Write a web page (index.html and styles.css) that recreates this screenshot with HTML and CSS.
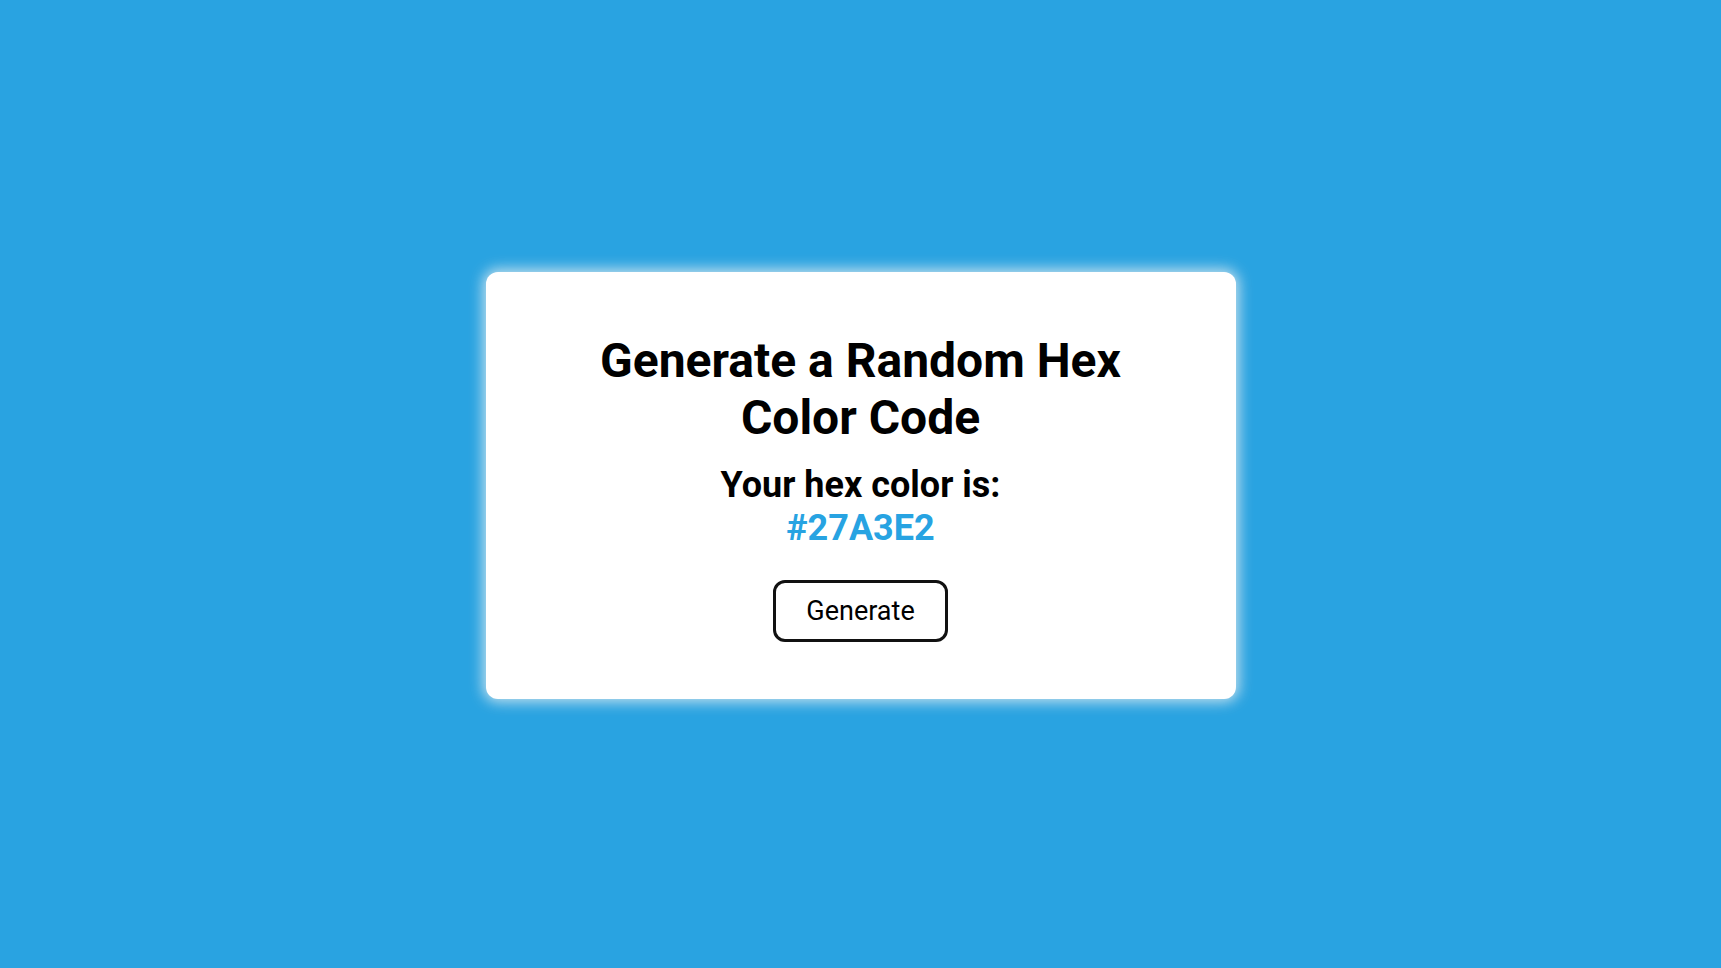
FILE: index.html
```html
<!DOCTYPE html>
<html lang="en">
<head>
<meta charset="utf-8">
<title>Random Hex Color</title>
<link rel="stylesheet" href="styles.css">
</head>
<body>
<main class="page">
  <section class="card">
    <h1 class="title">Generate a Random Hex Color Code</h1>
    <div class="result">
      <p class="label">Your hex color is:</p>
      <p class="hex">#27A3E2</p>
    </div>
    <button class="btn" type="button">Generate</button>
  </section>
</main>
</body>
</html>
```
FILE: styles.css
```css
* { box-sizing: border-box; }
html, body { margin: 0; height: 100%; }
body {
  background: #29a3e1;
  font-family: Roboto, "Liberation Sans", Arial, sans-serif;
  color: #000;
}
.page {
  height: 100%;
  padding-top: 3px;
  display: flex;
  align-items: center;
  justify-content: center;
}
.card {
  width: 750px;
  background: #fff;
  border-radius: 12px;
  box-shadow: 0 0 14px 3px rgba(225, 235, 240, 0.85);
  padding: 60px 80px 57px;
  display: flex;
  flex-direction: column;
  align-items: center;
  text-align: center;
}
.title {
  margin: 0;
  font-size: 48px;
  line-height: 1.2;
  font-weight: 700;
  width: 560px;
}
.result {
  margin-top: 17px;
  display: flex;
  flex-direction: column;
  align-items: center;
}
.label, .hex {
  margin: 0;
  font-size: 36px;
  line-height: 1.2;
  font-weight: 700;
}
.hex { color: #27a3e2; }
.btn {
  margin-top: 30px;
  height: 62px;
  padding: 0 30px;
  border: 3px solid #111;
  border-radius: 12px;
  background: #fff;
  font-family: Roboto, "Liberation Sans", Arial, sans-serif;
  font-size: 27px;
  color: #000;
  cursor: pointer;
}
```
